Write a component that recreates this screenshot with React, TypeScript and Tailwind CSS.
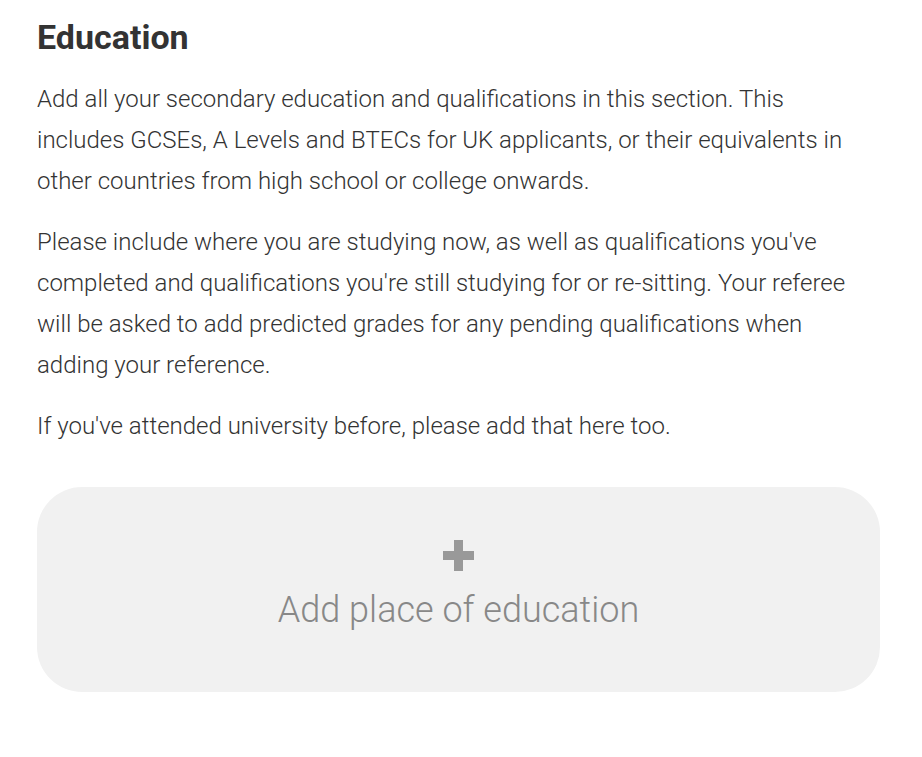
export default function App() {
  return (
    <div className="min-h-screen bg-white font-['Roboto',sans-serif]">
      <div className="w-[843px] ml-[37px] pt-[17px]">
        <h2 className="text-[34px] leading-[40px] font-bold text-[#333]">Education</h2>
        <div className="mt-[22px] w-[830px] text-[24px] leading-[41px] font-light text-[#333] flex flex-col gap-[20px]">
          <p>
            Add all your secondary education and qualifications in this section. This includes GCSEs, A Levels and
            BTECs for UK applicants, or their equivalents in other countries from high school or college onwards.
          </p>
          <p>
            Please include where you are studying now, as well as qualifications you've completed and qualifications
            you're still studying for or re-sitting. Your referee will be asked to add predicted grades for any pending
            qualifications when adding your reference.
          </p>
          <p>If you've attended university before, please add that here too.</p>
        </div>
        <button className="mt-[40px] w-full h-[205px] rounded-[45px] bg-[#f1f1f1] flex flex-col items-center justify-center">
          <svg width="31" height="31" viewBox="0 0 31 31" className="mt-[-6px]">
            <rect x="11" y="0" width="9" height="31" fill="#999" />
            <rect x="0" y="11" width="31" height="9" fill="#999" />
          </svg>
          <span className="mt-[15px] text-[36px] leading-[48px] font-light text-[#888]">Add place of education</span>
        </button>
      </div>
    </div>
  );
}
